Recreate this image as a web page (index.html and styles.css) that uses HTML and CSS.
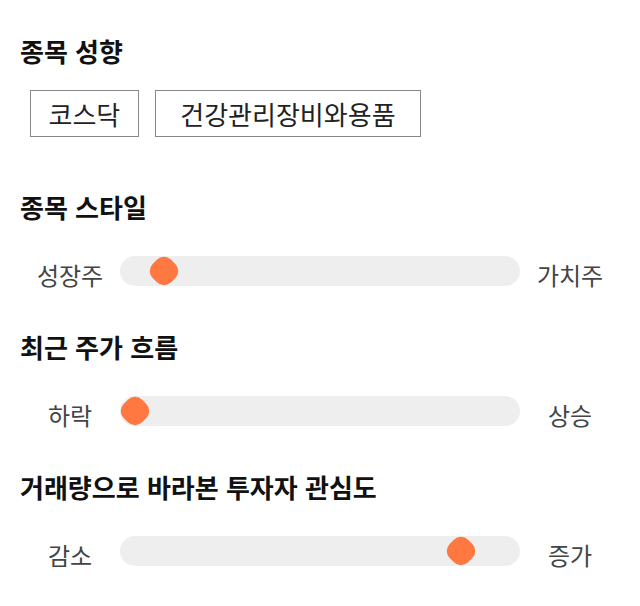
FILE: index.html
```html
<!DOCTYPE html>
<html lang="ko">
<head>
<meta charset="utf-8">
<title>종목 분석</title>
<link rel="stylesheet" href="styles.css">
</head>
<body>
<main class="panel">
  <section class="group group-choice">
    <h2 class="group-title">종목 성향</h2>
    <div class="chips">
      <span class="chip">코스닥</span>
      <span class="chip chip-wide">건강관리장비와용품</span>
    </div>
  </section>

  <section class="group">
    <h2 class="group-title">종목 스타일</h2>
    <div class="scale">
      <span class="scale-label">성장주</span>
      <div class="track"><div class="rail"><span class="thumb" style="left: 8%"></span></div></div>
      <span class="scale-label">가치주</span>
    </div>
  </section>

  <section class="group">
    <h2 class="group-title">최근 주가 흐름</h2>
    <div class="scale">
      <span class="scale-label">하락</span>
      <div class="track"><div class="rail"><span class="thumb" style="left: 0%"></span></div></div>
      <span class="scale-label">상승</span>
    </div>
  </section>

  <section class="group">
    <h2 class="group-title">거래량으로 바라본 투자자 관심도</h2>
    <div class="scale">
      <span class="scale-label">감소</span>
      <div class="track"><div class="rail"><span class="thumb" style="left: 88%"></span></div></div>
      <span class="scale-label">증가</span>
    </div>
  </section>
</main>
</body>
</html>
```

FILE: styles.css
```css
* { box-sizing: border-box; }

html, body {
  margin: 0;
  padding: 0;
  background: #ffffff;
}

body {
  font-family: "Noto Sans CJK KR", "Noto Sans", sans-serif;
  color: #111111;
}

.panel {
  width: 640px;
  padding: 35px 20px 20px;
}

.group + .group {
  margin-top: 41px;
}

.group-choice {
  padding-bottom: 13px;
}

.group-title {
  margin: 0;
  font-size: 26px;
  line-height: 32px;
  font-weight: 700;
  color: #111111;
}

.chips {
  display: flex;
  gap: 16px;
  margin-top: 23px;
  padding-left: 10px;
}

.chip {
  display: inline-block;
  height: 47px;
  padding: 0 17.5px;
  border: 1px solid #888888;
  font-size: 26px;
  line-height: 45px;
  color: #222222;
  white-space: nowrap;
}

.chip-wide {
  padding: 0 24.5px;
}

.scale {
  display: flex;
  align-items: center;
  margin-top: 29px;
}

.scale-label {
  width: 100px;
  flex: 0 0 100px;
  text-align: center;
  font-size: 24px;
  line-height: 30px;
  padding-top: 8px;
  color: #444444;
}

.track {
  position: relative;
  flex: 0 0 400px;
  height: 30px;
  background: #eeeeee;
  border-radius: 15px;
}

.rail {
  position: absolute;
  top: 0;
  bottom: 0;
  left: 14.5px;
  right: 14.5px;
}

.thumb {
  position: absolute;
  top: 50%;
  width: 26px;
  height: 26px;
  background: #ff7741;
  border-radius: 10px;
  transform: translate(-50%, -50%) rotate(45deg);
}
```
